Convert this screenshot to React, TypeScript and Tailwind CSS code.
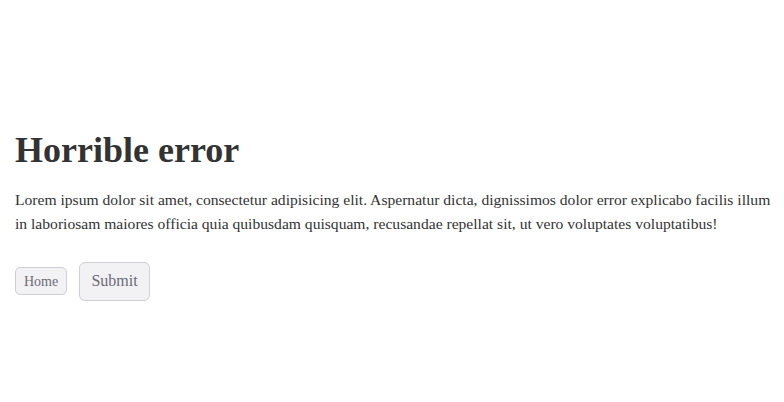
export default function App() {
  return (
    <div className="min-h-screen pt-[131px] pl-[15px] pr-[10px] bg-white text-[#333] font-['Liberation_Serif',serif]">
      <h1 className="text-[36px] font-bold leading-[1.1] mb-[17px]">Horrible error</h1>
      <p className="text-[15.6px] leading-[24px] mb-[26px]">
        Lorem ipsum dolor sit amet, consectetur adipisicing elit. Aspernatur dicta, dignissimos dolor error
        explicabo facilis illum in laboriosam maiores officia quia quibusdam quisquam, recusandae repellat sit, ut
        vero voluptates voluptatibus!
      </p>
      <div className="flex items-center gap-3">
        <button className="h-[28px] w-[52px] text-[14px] text-[#6b6b76] bg-[#f2f2f5] border border-[#cfcfd6] rounded-[5px]">
          Home
        </button>
        <button className="h-[39px] w-[71px] text-[16px] text-[#6b6b76] bg-[#f2f2f5] border border-[#cfcfd6] rounded-[6px]">
          Submit
        </button>
      </div>
    </div>
  );
}
